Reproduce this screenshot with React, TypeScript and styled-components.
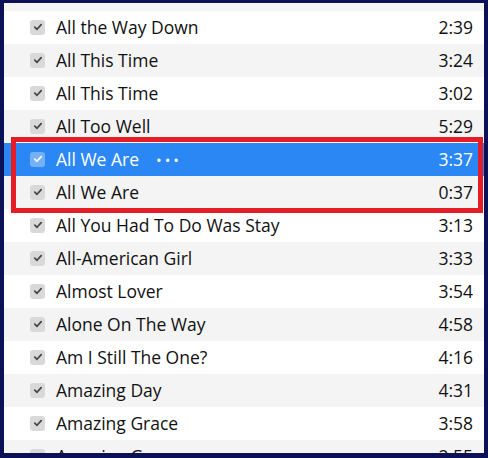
import React from 'react'
import styled, { createGlobalStyle } from 'styled-components'

// global reset for the page
const GlobalStyle = createGlobalStyle`
  html, body {
    margin: 0;
    padding: 0;
    background: #0c1157;
  }
  body {
    font-family: "Open Sans", "Noto Sans", "Liberation Sans", sans-serif;
  }
`

interface Track {
  title: string,
  time: string
}

// songs shown in the list
const tracks: Track[] = [
  { title: 'All the Way Down', time: '2:39' },
  { title: 'All This Time', time: '3:24' },
  { title: 'All This Time', time: '3:02' },
  { title: 'All Too Well', time: '5:29' },
  { title: 'All We Are', time: '3:37' },
  { title: 'All We Are', time: '0:37' },
  { title: 'All You Had To Do Was Stay', time: '3:13' },
  { title: 'All-American Girl', time: '3:33' },
  { title: 'Almost Lover', time: '3:54' },
  { title: 'Alone On The Way', time: '4:58' },
  { title: 'Am I Still The One?', time: '4:16' },
  { title: 'Amazing Day', time: '4:31' },
  { title: 'Amazing Grace', time: '3:58' },
  { title: 'Amazing Grace', time: '2:55' },
]

const Frame = styled.div`
  width: 488px;
  height: 458px;
  box-sizing: border-box;
  padding: 3px 4px 5px 4px;
  background: #0c1157;
`

const Viewport = styled.div`
  height: 100%;
  overflow: hidden;
  background: #ffffff;
`

const List = styled.div`
  display: flex;
  flex-direction: column;
`

// the row scrolled out of view above the list, only its bottom edge shows
const TopSliver = styled.div`
  height: 8px;
  background: #f4f4f4;
`

const Row = styled.div<{ $stripe: boolean, $selected?: boolean }>`
  height: 33px;
  box-sizing: border-box;
  flex: none;
  display: flex;
  align-items: center;
  padding: 0 11px 1px 26px;
  background: ${p => p.$selected ? '#2b87f3' : p.$stripe ? '#f4f4f4' : '#ffffff'};
  color: ${p => p.$selected ? '#ffffff' : '#111111'};
  font-size: 17.5px;
  font-weight: 500;
`

const Check = styled.span<{ $selected?: boolean }>`
  width: 15px;
  height: 15px;
  border-radius: 3px;
  flex: none;
  display: flex;
  align-items: center;
  justify-content: center;
  margin-right: 11px;
  background: ${p => p.$selected ? 'rgba(255,255,255,0.35)' : '#d9d9d9'};
  color: ${p => p.$selected ? '#ffffff' : '#444444'};
`

const Title = styled.span`
  flex: 1;
  white-space: nowrap;
`

const Dots = styled.span`
  margin-left: 17px;
  letter-spacing: 3px;
  font-size: 15px;
`

const Time = styled.span`
  flex: none;
`

// annotation box drawn over the two "All We Are" rows
const Highlight = styled.div`
  position: relative;
  display: flex;
  flex-direction: column;

  &::after {
    content: '';
    position: absolute;
    left: 7px;
    right: 1px;
    top: -6px;
    bottom: -4px;
    border: 5px solid #e51d27;
    pointer-events: none;
  }
`

const CheckMark = () => (
  <svg width="10" height="10" viewBox="0 0 10 10">
    <path d="M1.8 5.2 L4 7.3 L8.2 2.6" fill="none" stroke="currentColor" strokeWidth="1.7" strokeLinecap="round" strokeLinejoin="round" />
  </svg>
)

const TrackRow = ({ track, index, selected }: { track: Track, index: number, selected?: boolean }) => (
  <Row $stripe={index % 2 === 1} $selected={selected}>
    <Check $selected={selected}><CheckMark /></Check>
    <Title>
      {track.title}
      {selected ? <Dots>•••</Dots> : null}
    </Title>
    <Time>{track.time}</Time>
  </Row>
)

const App = () => {
  return (
    <>
      <GlobalStyle />
      <Frame>
        <Viewport>
          <List>
            <TopSliver />
            {tracks.slice(0, 4).map((t, i) => <TrackRow key={i} track={t} index={i} />)}
            <Highlight>
              <TrackRow track={tracks[4]} index={4} selected />
              <TrackRow track={tracks[5]} index={5} />
            </Highlight>
            {tracks.slice(6).map((t, i) => <TrackRow key={i + 6} track={t} index={i + 6} />)}
          </List>
        </Viewport>
      </Frame>
    </>
  )
}

export default App
